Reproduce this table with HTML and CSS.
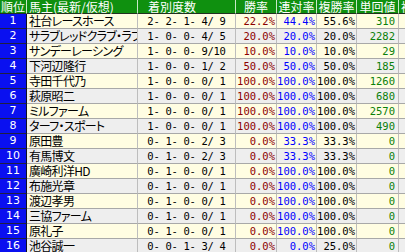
FILE: index.html
```html
<!DOCTYPE html>
<html lang="ja">
<head>
<meta charset="utf-8">
<title>馬主成績</title>
<link rel="stylesheet" href="styles.css">
</head>
<body>
<table class="rank">
  <colgroup>
    <col class="c-no"><col class="c-owner"><col class="c-rec"><col class="c-win"><col class="c-ren"><col class="c-fuku"><col class="c-tan"><col class="c-fukuval">
  </colgroup>
  <thead>
    <tr>
      <th class="h-no">順位</th>
      <th class="h-owner">馬主(最新/仮想)</th>
      <th class="h-rec">着別度数</th>
      <th>勝率</th>
      <th>連対率</th>
      <th>複勝率</th>
      <th>単回値</th>
      <th class="h-last">複回値</th>
    </tr>
  </thead>
  <tbody>
    <tr><td class="no">1</td><td class="owner">社台レースホース</td><td class="rec">2- 2- 1- 4/ 9</td><td class="win">22.2%</td><td class="ren">44.4%</td><td class="fuku">55.6%</td><td class="tan">310</td><td class="last"></td></tr>
    <tr><td class="no">2</td><td class="owner">サラブレッドクラブ・ラフィアン</td><td class="rec">1- 0- 0- 4/ 5</td><td class="win">20.0%</td><td class="ren">20.0%</td><td class="fuku">20.0%</td><td class="tan">2282</td><td class="last"></td></tr>
    <tr><td class="no">3</td><td class="owner">サンデーレーシング</td><td class="rec">1- 0- 0- 9/10</td><td class="win">10.0%</td><td class="ren">10.0%</td><td class="fuku">10.0%</td><td class="tan">29</td><td class="last"></td></tr>
    <tr><td class="no">4</td><td class="owner">下河辺隆行</td><td class="rec">1- 0- 0- 1/ 2</td><td class="win">50.0%</td><td class="ren">50.0%</td><td class="fuku">50.0%</td><td class="tan">185</td><td class="last"></td></tr>
    <tr><td class="no">5</td><td class="owner">寺田千代乃</td><td class="rec">1- 0- 0- 0/ 1</td><td class="win">100.0%</td><td class="ren">100.0%</td><td class="fuku">100.0%</td><td class="tan">1260</td><td class="last"></td></tr>
    <tr><td class="no">6</td><td class="owner">萩原昭二</td><td class="rec">1- 0- 0- 0/ 1</td><td class="win">100.0%</td><td class="ren">100.0%</td><td class="fuku">100.0%</td><td class="tan">680</td><td class="last"></td></tr>
    <tr><td class="no">7</td><td class="owner">ミルファーム</td><td class="rec">1- 0- 0- 0/ 1</td><td class="win">100.0%</td><td class="ren">100.0%</td><td class="fuku">100.0%</td><td class="tan">2570</td><td class="last"></td></tr>
    <tr><td class="no">8</td><td class="owner">ターフ・スポート</td><td class="rec">1- 0- 0- 0/ 1</td><td class="win">100.0%</td><td class="ren">100.0%</td><td class="fuku">100.0%</td><td class="tan">490</td><td class="last"></td></tr>
    <tr><td class="no">9</td><td class="owner">原田豊</td><td class="rec">0- 1- 0- 2/ 3</td><td class="win">0.0%</td><td class="ren">33.3%</td><td class="fuku">33.3%</td><td class="tan">0</td><td class="last"></td></tr>
    <tr><td class="no">10</td><td class="owner">有馬博文</td><td class="rec">0- 1- 0- 2/ 3</td><td class="win">0.0%</td><td class="ren">33.3%</td><td class="fuku">33.3%</td><td class="tan">0</td><td class="last"></td></tr>
    <tr><td class="no">11</td><td class="owner">廣崎利洋HD</td><td class="rec">0- 1- 0- 0/ 1</td><td class="win">0.0%</td><td class="ren">100.0%</td><td class="fuku">100.0%</td><td class="tan">0</td><td class="last"></td></tr>
    <tr><td class="no">12</td><td class="owner">布施光章</td><td class="rec">0- 1- 0- 0/ 1</td><td class="win">0.0%</td><td class="ren">100.0%</td><td class="fuku">100.0%</td><td class="tan">0</td><td class="last"></td></tr>
    <tr><td class="no">13</td><td class="owner">渡辺孝男</td><td class="rec">0- 1- 0- 0/ 1</td><td class="win">0.0%</td><td class="ren">100.0%</td><td class="fuku">100.0%</td><td class="tan">0</td><td class="last"></td></tr>
    <tr><td class="no">14</td><td class="owner">三協ファーム</td><td class="rec">0- 1- 0- 0/ 1</td><td class="win">0.0%</td><td class="ren">100.0%</td><td class="fuku">100.0%</td><td class="tan">0</td><td class="last"></td></tr>
    <tr><td class="no">15</td><td class="owner">原礼子</td><td class="rec">0- 1- 0- 0/ 1</td><td class="win">0.0%</td><td class="ren">100.0%</td><td class="fuku">100.0%</td><td class="tan">0</td><td class="last"></td></tr>
    <tr><td class="no">16</td><td class="owner">池谷誠一</td><td class="rec">0- 0- 1- 3/ 4</td><td class="win">0.0%</td><td class="ren">0.0%</td><td class="fuku">25.0%</td><td class="tan">0</td><td class="last"></td></tr>
  </tbody>
</table>
</body>
</html>
```
FILE: styles.css
```css
html, body {
  margin: 0;
  padding: 0;
  overflow: hidden;
  background: #ffffff;
}

.rank {
  table-layout: fixed;
  width: 440px;
  border-collapse: separate;
  border-spacing: 0;
  font-family: "Noto Sans CJK JP", sans-serif;
  font-size: 12px;
  line-height: 14px;
  color: #000;
}

.c-no { width: 27px; }
.c-owner { width: 111px; }
.c-rec { width: 98px; }
.c-win { width: 41px; }
.c-ren { width: 40px; }
.c-fuku { width: 40px; }
.c-tan { width: 42px; }
.c-fukuval { width: 41px; }

.rank th,
.rank td {
  box-sizing: border-box;
  padding: 0;
  white-space: pre;
  border-right: 1px solid #bdbdbd;
  border-bottom: 1px solid #a8a8a8;
}

.rank th {
  height: 14px;
  line-height: 13px;
  background: #0f900f;
  color: #ffffff;
  font-weight: normal;
  text-align: center;
  border-right-color: #c8e8c8;
  border-bottom-color: #203020;
}

.rank .h-owner {
  text-align: left;
  padding-left: 2px;
  font-feature-settings: "palt";
}

.rank .h-rec {
  text-align: left;
  padding-left: 10px;
}

.rank td {
  height: 15px;
}

.rank tbody tr:nth-child(odd) { background: #fffde2; }
.rank tbody tr:nth-child(even) { background: #eeeeee; }

.rank td.no {
  background: #0a10f0;
  color: #ffffff;
  text-align: center;
  font-family: "DejaVu Sans", sans-serif;
  font-size: 11px;
  border-right-color: #101020;
  border-bottom-color: #202040;
}

.owner {
  padding-left: 2px !important;
  font-feature-settings: "palt";
  letter-spacing: -0.7px;
  overflow: hidden;
}

.rec,
.win,
.ren,
.fuku,
.tan {
  font-family: "DejaVu Sans Mono", monospace;
  font-size: 10.5px;
}

.rec {
  text-align: center;
  letter-spacing: -0.3px;
}

.win,
.ren,
.fuku {
  text-align: right;
  padding-right: 1px !important;
}

.win { color: #8c0000; }
.ren { color: #0000ff; }
.fuku { color: #000000; }

.tan {
  text-align: right;
  color: #0a800a;
  padding-right: 3px !important;
}

.last {
  overflow: hidden;
}
```
